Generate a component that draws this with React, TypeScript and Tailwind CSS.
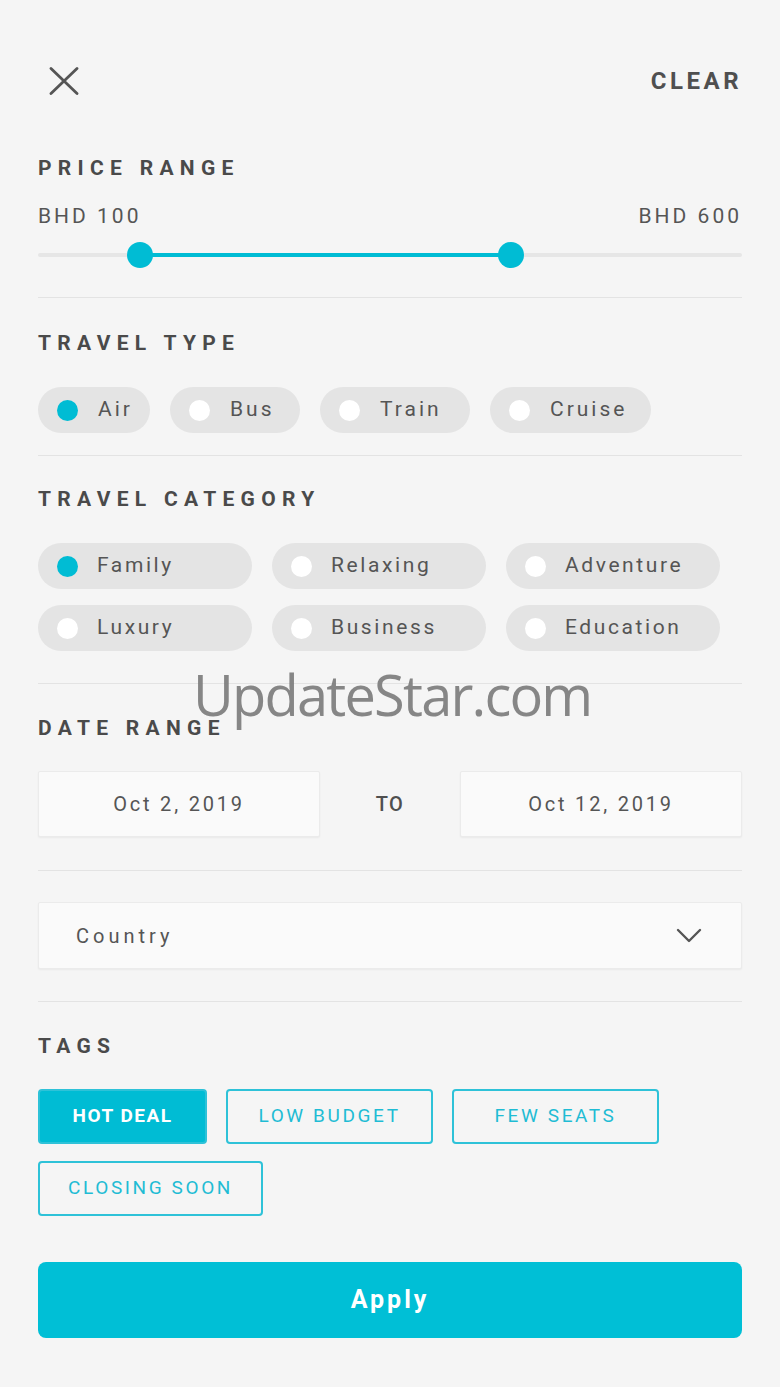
import { useState } from "react";

const travelTypes = [
  { label: "Air", w: "w-[112px]" },
  { label: "Bus", w: "w-[130px]" },
  { label: "Train", w: "w-[150px]" },
  { label: "Cruise", w: "w-[161px]" },
];

const categories = ["Family", "Relaxing", "Adventure", "Luxury", "Business", "Education"];

const tags = [
  { label: "HOT DEAL", w: "w-[169px]" },
  { label: "LOW BUDGET", w: "w-[207px]" },
  { label: "FEW SEATS", w: "w-[207px]" },
  { label: "CLOSING SOON", w: "w-[225px]" },
];

const SectionTitle = ({ children, className = "" }: { children: string; className?: string }) => (
  <h2 className={`text-[21px] leading-[24px] font-bold tracking-[6.3px] text-[#4a4a4a] ${className}`}>{children}</h2>
);

const Divider = ({ className = "" }: { className?: string }) => <div className={`h-px bg-[#e3e3e3] ${className}`} />;

const Radio = ({ on }: { on: boolean }) => (
  <span className={`w-[21px] h-[21px] rounded-full shrink-0 ${on ? "bg-[#00bcd4]" : "bg-white"}`} />
);

export default function App() {
  const [type, setType] = useState("Air");
  const [cat, setCat] = useState("Family");
  const [tag, setTag] = useState("HOT DEAL");

  return (
    <div className="relative min-h-[1387px] bg-[#f5f5f5] px-[38px] pt-[61px] font-['Roboto',sans-serif] text-[#555]">
      <div className="flex items-center justify-between h-10">
        <svg width="30" height="28" viewBox="0 0 30 28" className="ml-[11px]">
          <path d="M2 1.5 L28 26.5 M28 1.5 L2 26.5" stroke="#555" strokeWidth="2.8" strokeLinecap="round" fill="none" />
        </svg>
        <span className="text-[24px] font-bold tracking-[3.5px] text-[#4f4f4f]">CLEAR</span>
      </div>

      <SectionTitle className="mt-[55px]">PRICE RANGE</SectionTitle>
      <div className="mt-[24px] flex justify-between text-[21px] leading-[24px] tracking-[3px]">
        <span>BHD 100</span>
        <span>BHD 600</span>
      </div>
      <div className="relative mt-[14px] h-[26px]">
        <div className="absolute left-0 right-0 top-[11px] h-[4px] rounded-full bg-[#e6e6e6]" />
        <div className="absolute left-[102px] w-[371px] top-[11px] h-[4px] bg-[#00bcd4]" />
        <span className="absolute left-[89px] top-0 w-[26px] h-[26px] rounded-full bg-[#00bcd4]" />
        <span className="absolute left-[460px] top-0 w-[26px] h-[26px] rounded-full bg-[#00bcd4]" />
      </div>
      <Divider className="mt-[29px]" />

      <SectionTitle className="mt-[33px]">TRAVEL TYPE</SectionTitle>
      <div className="mt-[32px] flex gap-5">
        {travelTypes.map((t) => (
          <button
            key={t.label}
            onClick={() => setType(t.label)}
            className={`${t.w} h-[46px] rounded-full bg-[#e4e4e4] flex items-center gap-[20px] pl-[19px] text-[21px] tracking-[3px]`}>
            <Radio on={type === t.label} />
            <span>{t.label}</span>
          </button>
        ))}
      </div>
      <Divider className="mt-[22px]" />

      <SectionTitle className="mt-[31px]">TRAVEL CATEGORY</SectionTitle>
      <div className="mt-[32px] grid grid-cols-[214px_214px_214px] gap-x-5 gap-y-4">
        {categories.map((c) => (
          <button
            key={c}
            onClick={() => setCat(c)}
            className="h-[46px] rounded-full bg-[#e4e4e4] flex items-center gap-[19px] pl-[19px] text-[21px] tracking-[2.6px]">
            <Radio on={cat === c} />
            <span>{c}</span>
          </button>
        ))}
      </div>
      <Divider className="mt-[32px]" />

      <SectionTitle className="mt-[32px]">DATE RANGE</SectionTitle>
      <div className="mt-[31px] grid grid-cols-[282px_1fr_282px] items-center">
        <div className="h-[66px] flex items-center justify-center bg-[#fafafa] border border-[#ebebeb] rounded-[2px] shadow-[0_1px_2px_rgba(0,0,0,0.05)] text-[20px] tracking-[2.8px]">
          Oct 2, 2019
        </div>
        <span className="text-center text-[20px] font-medium tracking-[1.5px] text-[#4f4f4f]">TO</span>
        <div className="h-[66px] flex items-center justify-center bg-[#fafafa] border border-[#ebebeb] rounded-[2px] shadow-[0_1px_2px_rgba(0,0,0,0.05)] text-[20px] tracking-[2.8px]">
          Oct 12, 2019
        </div>
      </div>
      <Divider className="mt-[33px]" />

      <div className="mt-[31px] h-[67px] flex items-center justify-between pl-[37px] pr-[39px] bg-[#fafafa] border border-[#ebebeb] rounded-[2px] shadow-[0_1px_2px_rgba(0,0,0,0.05)]">
        <span className="text-[20px] tracking-[4px]">Country</span>
        <svg width="26" height="15" viewBox="0 0 26 15">
          <path d="M2 2 L13 13 L24 2" stroke="#555" strokeWidth="2.4" fill="none" strokeLinecap="round" strokeLinejoin="round" />
        </svg>
      </div>
      <Divider className="mt-[32px]" />

      <SectionTitle className="mt-[32px]">TAGS</SectionTitle>
      <div className="mt-[31px] flex flex-wrap gap-x-[19px] gap-y-[17px] w-[640px]">
        {tags.map((t) => {
          const on = tag === t.label;
          return (
            <button
              key={t.label}
              onClick={() => setTag(t.label)}
              className={`${t.w} h-[55px] rounded-[4px] border-2 border-[#2ec2d8] text-[19px] ${
                on ? "bg-[#00bcd4] text-white font-bold tracking-[1.5px]" : "text-[#1fbcd4] tracking-[2.6px]"
              }`}>
              {t.label}
            </button>
          );
        })}
      </div>

      <button className="mt-[46px] w-full h-[76px] rounded-[8px] bg-[#00bfd6] text-white text-[25px] font-bold tracking-[3px]">
        Apply
      </button>

      <span className="pointer-events-none absolute left-[193px] top-[658px] font-['Open_Sans',sans-serif] text-[56px] leading-[72px] tracking-[-1.8px] text-[#7a7a7a]/90">
        UpdateStar.com
      </span>
    </div>
  );
}
